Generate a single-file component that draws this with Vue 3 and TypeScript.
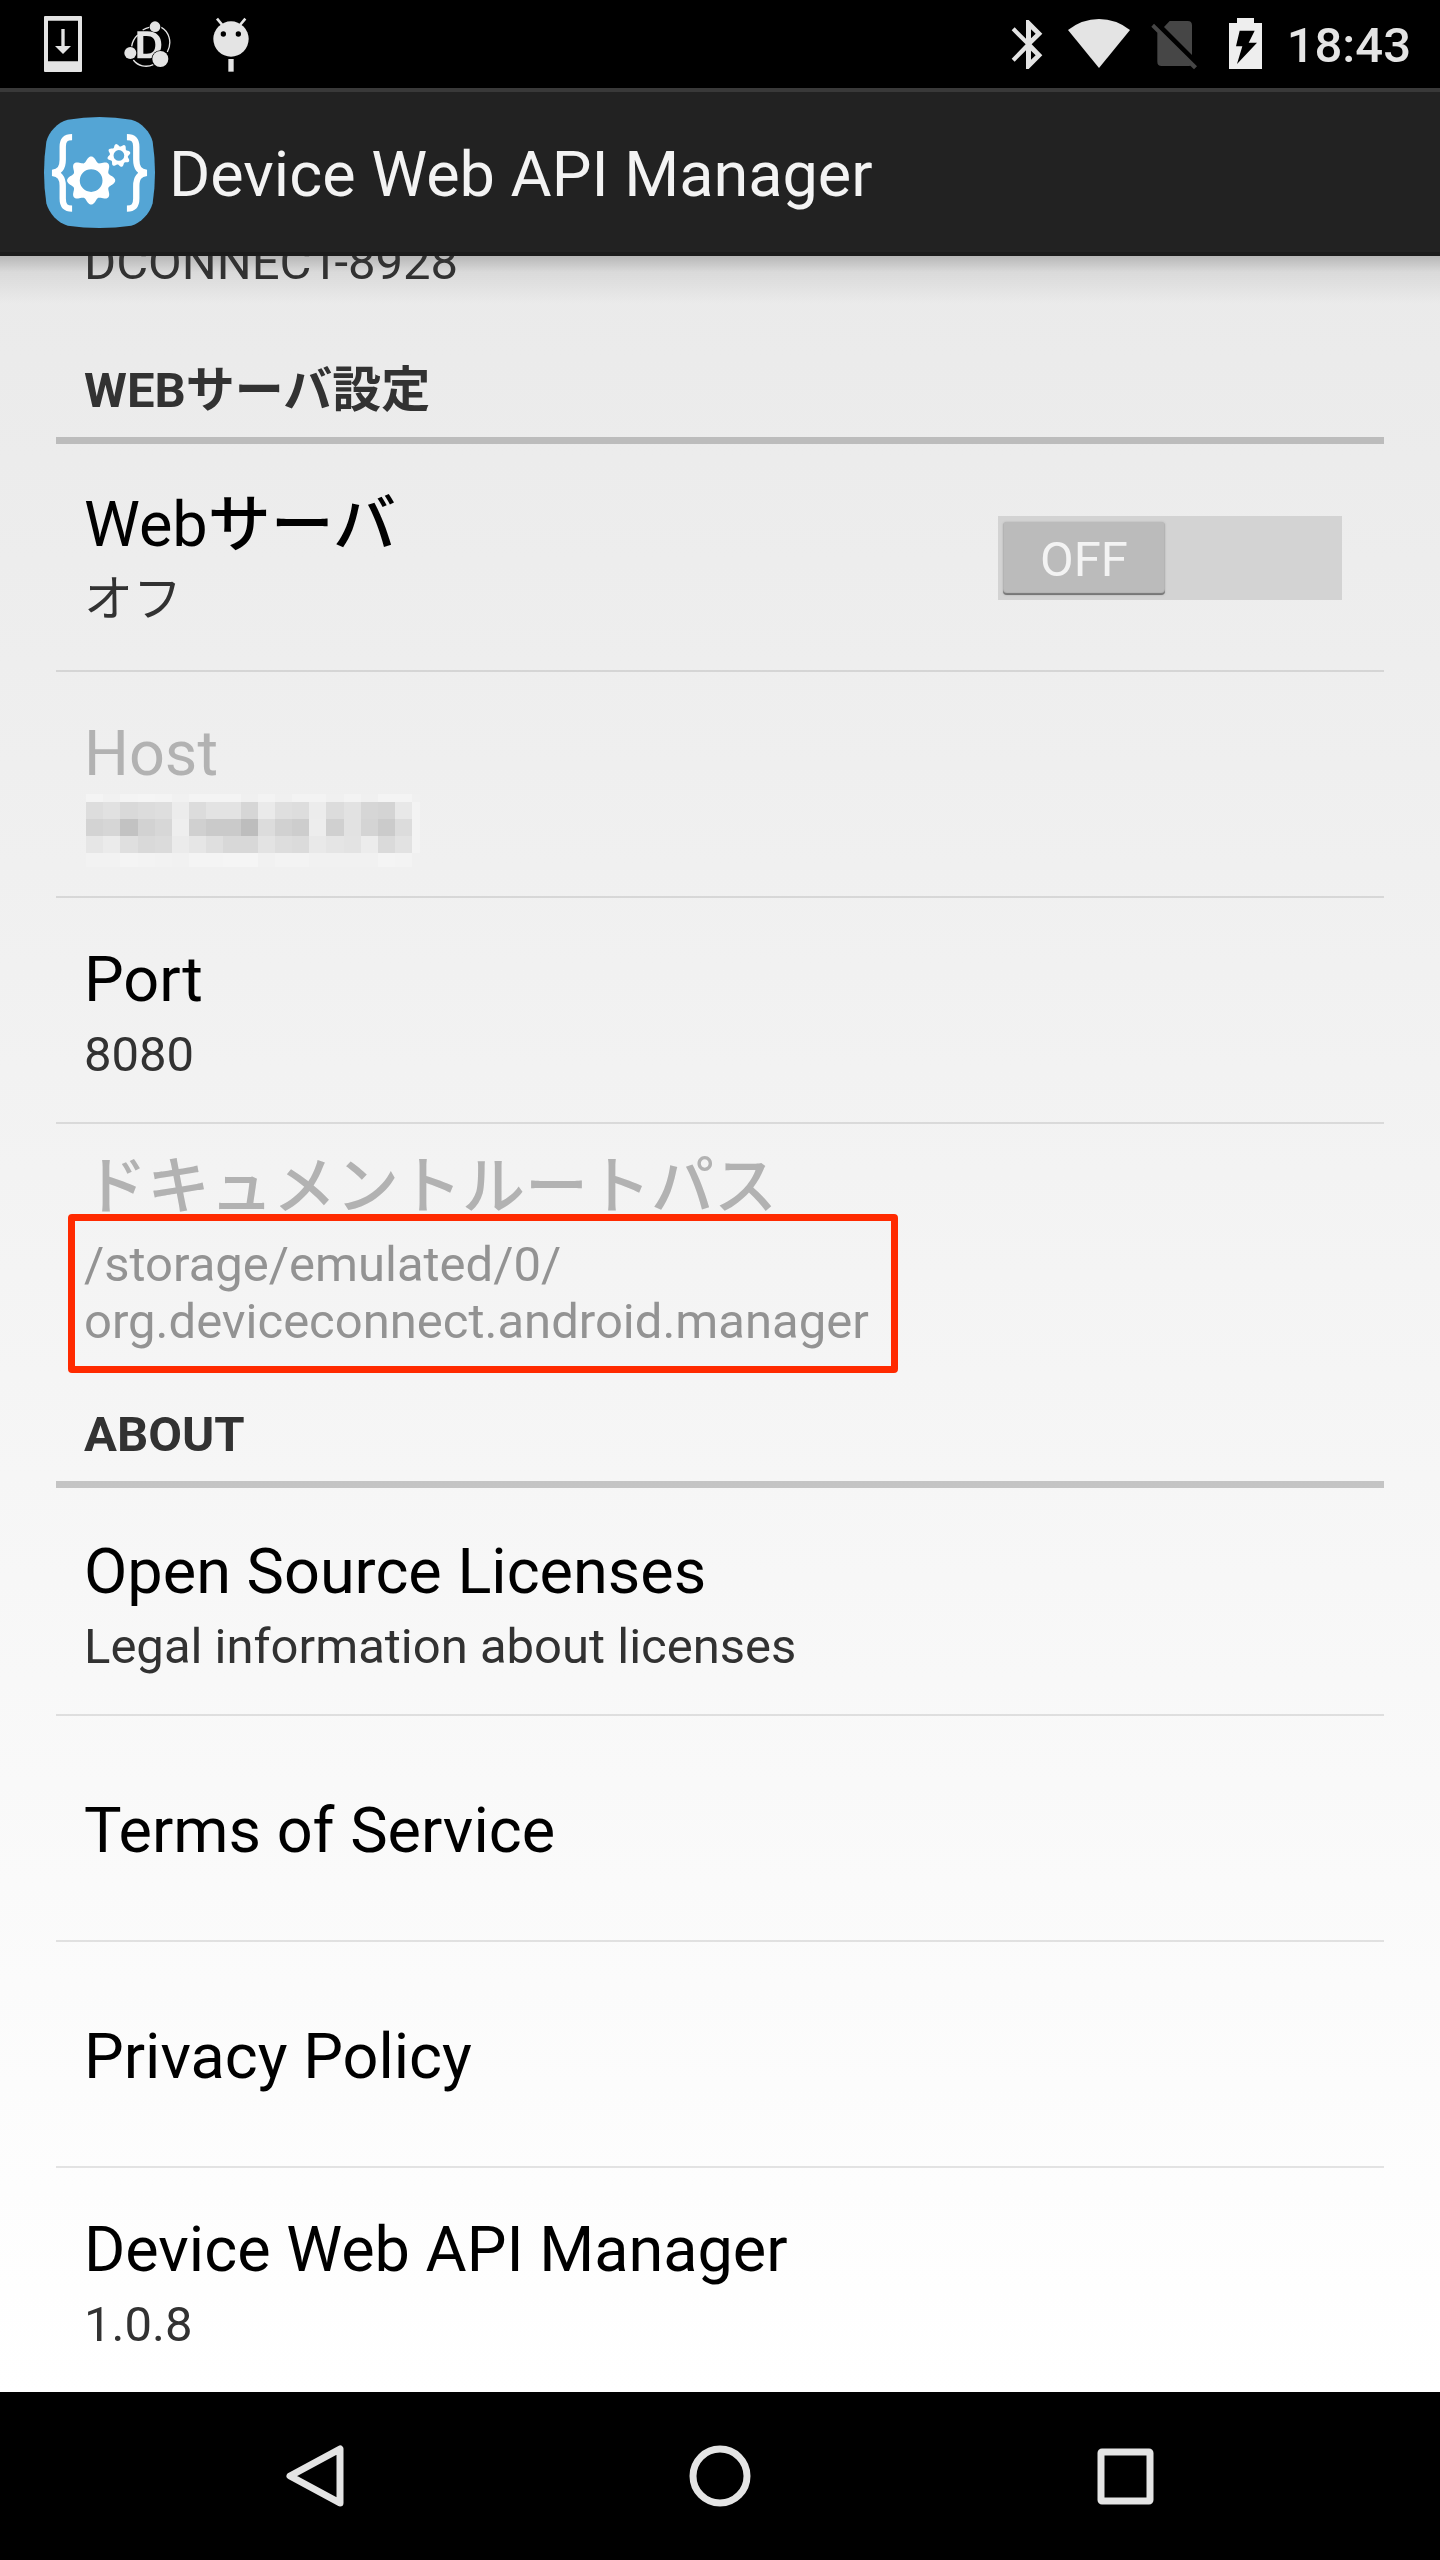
<script setup lang="ts">
import { ref, computed } from 'vue'

interface Item {
  title: string
  summary?: string
  disabled?: boolean
  masked?: boolean
  marked?: boolean
}

const webServerOn = ref(false)
const webServerState = computed(() => (webServerOn.value ? 'オン' : 'オフ'))

const serverItems: Item[] = [
  { title: 'Host', disabled: true, masked: true },
  { title: 'Port', summary: '8080' },
  {
    title: 'ドキュメントルートパス',
    summary: '/storage/emulated/0/\norg.deviceconnect.android.manager',
    disabled: true,
    marked: true,
  },
]

const aboutItems: Item[] = [
  { title: 'Open Source Licenses', summary: 'Legal information about licenses' },
  { title: 'Terms of Service' },
  { title: 'Privacy Policy' },
  { title: 'Device Web API Manager', summary: '1.0.8' },
]

// Grey levels of the pixelated host address, one string of hex pairs per band.
const bands = [
  { y: 0, h: 8, levels: 'f4f1f4f5f4f1f4f4f4f0f3f0f3f3f0f3f0f4f4f0' },
  { y: 8, h: 17, levels: 'dde1d9dcdeecdce3e3d6eadfddecdce2d6d4e8f3' },
  { y: 25, h: 17, levels: 'd3d6c2d2d7eed0cacabddcd1cdedd0e2d4cbdcf3' },
  { y: 42, h: 17, levels: 'e6ebdfd9dbebe6dfd8d8e3dddbe9e5e3ecdae2f3' },
  { y: 59, h: 14, levels: 'f2f2f4f3f2f1f4f4f5f5f1f3f3f1f1f1f1f4f3f0' },
]
const column = (i: number) => Math.round((i * 103) / 6)
const mosaic = bands.flatMap((band) =>
  (band.levels.match(/../g) ?? []).map((level, i) => ({
    x: column(i),
    y: band.y,
    w: i === 19 ? 8 : column(i + 1) - column(i),
    h: band.h,
    fill: `#${level}${level}${level}`,
  })),
)

// Closed outline of an eight-toothed gear with a round hole.
function gear(cx: number, cy: number, mid: number, amp: number, hole: number, turn: number): string {
  const points: string[] = []
  for (let i = 0; i < 160; i++) {
    const a = (i / 160) * Math.PI * 2
    const r = mid + amp * Math.cos(8 * a)
    const t = a + turn
    points.push(`${(cx + r * Math.sin(t)).toFixed(1)} ${(cy - r * Math.cos(t)).toFixed(1)}`)
  }
  return `M${points.join('L')}ZM${cx - hole} ${cy}a${hole} ${hole} 0 1 0 ${hole * 2} 0a${hole} ${hole} 0 1 0 ${-hole * 2} 0Z`
}
const bigGear = gear(274, 299, 64, 8, 34, 0)
const smallGear = gear(357, 224, 31, 4, 16, -0.26)
</script>

<template>
  <div class="screen">
    <div class="status">
      <div class="notices">
        <svg width="38" height="56" viewBox="132 48 114 168" aria-hidden="true">
          <path fill="#e4e4e4" fill-rule="evenodd" d="M135 48h108q3 0 3 3v162q0 3-3 3H135q-3 0-3-3V51q0-3 3-3zM144 62v122h90V62z" />
          <path fill="#e4e4e4" d="M184 87h10v51h19l-24 24-24-24h19z" />
        </svg>
        <svg width="47" height="56" viewBox="372 48 141 168" aria-hidden="true">
          <g fill="none" stroke="#e4e4e4" stroke-width="4">
            <path d="M395 139a57 57 0 0 1 18-34M428 90q10-6 20-8M484 82c22 12 34 44 18 74M400 180c14 18 38 24 60 14" />
          </g>
          <path fill="#e4e4e4" fill-rule="evenodd" d="M412 94h30c28 0 42 16 42 40 0 26-16 41-42 41h-30zM430 108v53h10c18 0 26-9 26-27 0-17-8-26-26-26z" />
          <circle cx="465" cy="80" r="16" fill="#e4e4e4" />
          <circle cx="391" cy="159" r="18" fill="#e4e4e4" />
          <circle cx="481" cy="177" r="26" fill="#000" />
          <circle cx="481" cy="177" r="24" fill="#e4e4e4" />
        </svg>
        <svg width="36" height="56" viewBox="639 48 108 168" aria-hidden="true">
          <path d="M651 56l16 19M736 56l-16 19" stroke="#e4e4e4" stroke-width="8" />
          <circle cx="693" cy="117" r="53" fill="#e4e4e4" />
          <circle cx="670" cy="102" r="8" />
          <circle cx="715" cy="102" r="8" />
          <path fill="#e4e4e4" d="M685 177h16v38h-16z" />
        </svg>
      </div>
      <div class="signals">
        <svg width="73" height="56" viewBox="30 48 219 168" aria-hidden="true">
          <path fill="#e4e4e4" fill-rule="evenodd" d="M138 60h8l41 41-32 32 32 33-41 41h-8v-56l-34 34-9-9 42-43-42-42 9-9 34 34zM153 88v27l14-14zM153 152v27l14-13z" />
        </svg>
        <svg width="73" height="56" viewBox="249 48 219 168" aria-hidden="true">
          <path fill="#e4e4e4" d="M264 90q42-33 93-33t93 33l-93 114z" />
        </svg>
        <svg width="73" height="56" viewBox="468 48 219 168" aria-hidden="true">
          <path fill="#464646" d="M569 63h54q13 0 13 13v89l-84-84zM522 71l129 128-9 9-11-11q-4 1-8 1h-78q-13 0-13-13V98l-18-18z" />
        </svg>
        <svg width="73" height="56" viewBox="687 48 219 168" aria-hidden="true">
          <path fill="#eee" d="M771 54h51v15h24v138h-99V69h24z" />
          <path d="M779 92h45l-18 36h25l-60 64 16-53h-19z" />
        </svg>
        <time class="clock">18:43</time>
      </div>
    </div>

    <header class="appbar">
      <svg width="111" height="111" viewBox="133 109 332 332" aria-hidden="true">
        <path fill="#54a5d5" d="M204 117q95-16 190 0c30 7 58 38 64 66q14 92 0 184c-8 30-36 60-64 67q-95 14-190 0c-30-8-56-37-64-67q-14-92 0-184c6-28 34-59 64-66z" />
        <path fill="none" stroke="#fff" stroke-width="19" d="M217 169c-20 0-28 7-28 29v39c0 24-8 36-31 39c23 3 31 15 31 39v38c0 22 8 30 28 30M381 169c20 0 28 7 28 29v39c0 24 8 36 31 39c-23 3-31 15-31 39v38c0 22-8 30-28 30" />
        <path fill="#fff" fill-rule="evenodd" :d="bigGear" />
        <path fill="#fff" fill-rule="evenodd" :d="smallGear" />
      </svg>
      <h1>Device Web API Manager</h1>
    </header>

    <main class="content">
      <div class="scrolled"><span class="summary">DCONNECT-8928</span></div>

      <section>
        <h2>WEBサーバ設定</h2>
        <ul>
          <li>
            <div class="row web">
              <span class="texts">
                <label class="title" for="web-server">Web<span class="kana">サーバ</span></label>
                <span class="summary">{{ webServerState }}</span>
              </span>
              <span class="switch" :class="{ on: webServerOn }">
                <span class="thumb">{{ webServerOn ? 'ON' : 'OFF' }}</span>
                <input id="web-server" v-model="webServerOn" type="checkbox" role="switch" />
              </span>
            </div>
          </li>
          <li v-for="item in serverItems" :key="item.title">
            <button type="button" class="row" :class="{ marked: item.marked }" :disabled="item.disabled">
              <span class="texts">
                <span class="title" :class="{ kana: item.marked }">{{ item.title }}</span>
                <svg v-if="item.masked" class="mosaic" width="334" height="73" viewBox="0 0 334 73" shape-rendering="crispEdges" aria-hidden="true">
                  <rect v-for="(c, i) in mosaic" :key="i" :x="c.x" :y="c.y" :width="c.w" :height="c.h" :fill="c.fill" />
                </svg>
                <span v-else class="summary">{{ item.summary }}</span>
              </span>
            </button>
          </li>
        </ul>
      </section>

      <section>
        <h2>ABOUT</h2>
        <ul>
          <li v-for="item in aboutItems" :key="item.title">
            <button type="button" class="row" :class="{ single: !item.summary }">
              <span class="texts">
                <span class="title">{{ item.title }}</span>
                <span v-if="item.summary" class="summary">{{ item.summary }}</span>
              </span>
            </button>
          </li>
        </ul>
      </section>
    </main>

    <nav class="navbar">
      <button type="button" aria-label="Back">
        <svg width="66" height="66" viewBox="0 0 66 66" aria-hidden="true">
          <path d="M58 6v54L8 33z" />
        </svg>
      </button>
      <button type="button" aria-label="Home">
        <svg width="66" height="66" viewBox="0 0 66 66" aria-hidden="true">
          <circle cx="33" cy="33" r="27" />
        </svg>
      </button>
      <button type="button" aria-label="Recent apps">
        <svg width="66" height="66" viewBox="0 0 66 66" aria-hidden="true">
          <rect x="9" y="9" width="49" height="49" rx="1" />
        </svg>
      </button>
    </nav>
  </div>
</template>

<style>
body {
  margin: 0;
  background: #000;
}
</style>

<style scoped>
.screen {
  display: flex;
  flex-direction: column;
  min-height: 100vh;
  font-family: Roboto, "Noto Sans CJK JP", sans-serif;
  color: #000;
}

.status {
  display: flex;
  justify-content: space-between;
  height: 88px;
  padding: 0 29px 0 44px;
  background: #000;
}

.notices,
.signals {
  display: flex;
  align-items: center;
}

.notices {
  gap: 42px;
}

.clock {
  padding: 4px 0 0 5px;
  font-size: 49px;
  font-weight: 500;
  line-height: 56px;
  color: #e4e4e4;
}

.appbar {
  box-sizing: border-box;
  display: flex;
  align-items: center;
  gap: 14px;
  height: 168px;
  padding: 0 44px;
  border-top: 4px solid #393939;
  border-bottom: 4px solid #1b1b1b;
  background: #222;
}

h1 {
  margin: 0;
  padding-top: 5px;
  font-size: 63px;
  font-weight: 400;
  line-height: 74px;
  color: #f3f3f3;
}

.content {
  flex: 1;
  padding: 0 56px;
  background:
    linear-gradient(rgba(0, 0, 0, 0.22), rgba(0, 0, 0, 0.07) 16px, transparent 48px),
    linear-gradient(#eaeaea, #fff);
}

.scrolled {
  box-sizing: border-box;
  display: flex;
  align-items: flex-end;
  height: 48px;
  padding: 0 28px 13px;
  overflow: hidden;
}

h2 {
  box-sizing: border-box;
  height: 140px;
  margin: 0 0 2px;
  padding: 58px 28px 0;
  border-bottom: 7px solid rgba(0, 0, 0, 0.2);
  font-size: 49px;
  font-weight: 700;
  line-height: 58px;
  color: #323232;
}

ul {
  margin: 0;
  padding: 0;
  list-style: none;
}

li + li {
  border-top: 2px solid rgba(0, 0, 0, 0.1);
}

.row {
  box-sizing: border-box;
  display: flex;
  justify-content: space-between;
  align-items: flex-start;
  width: 100%;
  min-height: 224px;
  margin: 0;
  padding: 36px 42px 0 28px;
  border: 0;
  background: none;
  font: inherit;
  text-align: left;
  color: inherit;
}

.row.web {
  padding-top: 33px;
}

.row.single {
  align-items: center;
  padding-top: 6px;
}

.row.marked {
  padding-top: 17px;
}

.texts {
  display: flex;
  flex-direction: column;
  align-items: flex-start;
}

.title {
  font-size: 63px;
  line-height: 92px;
}

.kana {
  font-weight: 500;
}

.summary {
  font-size: 49px;
  line-height: 57px;
  white-space: pre-line;
  color: #323232;
}

.row:disabled .title {
  color: #b2b2b2;
}

.row:disabled .summary {
  color: #939393;
}

.marked .summary {
  position: relative;
  margin: 3px 0 -3px;
}

.marked .summary::after {
  content: "";
  position: absolute;
  inset: -22px -29px -23px -16px;
  border: 7px solid #ff2a00;
  border-radius: 4px;
}

.mosaic {
  display: block;
  margin: -6px 2px 0;
}

.switch {
  box-sizing: border-box;
  position: relative;
  display: flex;
  width: 344px;
  height: 84px;
  margin-top: 37px;
  padding: 6px 5px 5px;
  background: #d3d3d3;
}

.switch.on {
  justify-content: flex-end;
}

.thumb {
  width: 162px;
  border-radius: 4px;
  background: #bbb;
  box-shadow: inset 0 -2px 1px #777, 0 0 2px #aaa;
  font-size: 49px;
  line-height: 75px;
  text-align: center;
  color: #f3f3f3;
}

.switch input {
  position: absolute;
  inset: 0;
  width: 100%;
  height: 100%;
  margin: 0;
  opacity: 0;
}

.navbar {
  display: flex;
  height: 168px;
  padding: 0 112px;
  background: #000;
}

.navbar button {
  display: flex;
  flex: 1;
  justify-content: center;
  align-items: center;
  padding: 0;
  border: 0;
  background: none;
}

.navbar svg {
  fill: none;
  stroke: #e4e4e4;
  stroke-width: 7px;
  stroke-linejoin: round;
}
</style>
